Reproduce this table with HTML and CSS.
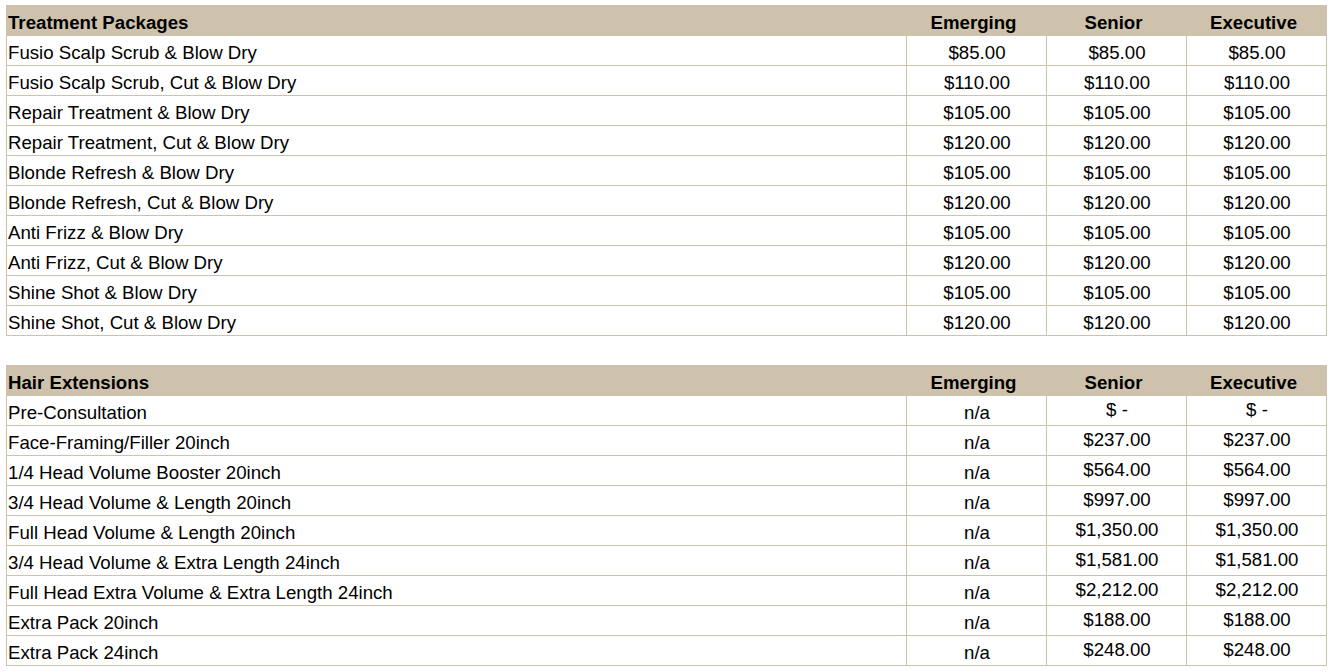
FILE: index.html
```html
<!DOCTYPE html>
<html lang="en">
<head>
<meta charset="utf-8">
<title>Price List</title>
<link rel="stylesheet" href="styles.css">
</head>
<body>
<div class="sheet">
<table class="price-table">
  <colgroup><col class="c-name"><col class="c-tier"><col class="c-tier"><col class="c-tier"></colgroup>
  <thead>
    <tr><th class="name">Treatment Packages</th><th>Emerging</th><th>Senior</th><th>Executive</th></tr>
  </thead>
  <tbody>
    <tr><td class="name">Fusio Scalp Scrub &amp; Blow Dry</td><td>$85.00</td><td>$85.00</td><td>$85.00</td></tr>
    <tr><td class="name">Fusio Scalp Scrub, Cut &amp; Blow Dry</td><td>$110.00</td><td>$110.00</td><td>$110.00</td></tr>
    <tr><td class="name">Repair Treatment &amp; Blow Dry</td><td>$105.00</td><td>$105.00</td><td>$105.00</td></tr>
    <tr><td class="name">Repair Treatment, Cut &amp; Blow Dry</td><td>$120.00</td><td>$120.00</td><td>$120.00</td></tr>
    <tr><td class="name">Blonde Refresh &amp; Blow Dry</td><td>$105.00</td><td>$105.00</td><td>$105.00</td></tr>
    <tr><td class="name">Blonde Refresh, Cut &amp; Blow Dry</td><td>$120.00</td><td>$120.00</td><td>$120.00</td></tr>
    <tr><td class="name">Anti Frizz &amp; Blow Dry</td><td>$105.00</td><td>$105.00</td><td>$105.00</td></tr>
    <tr><td class="name">Anti Frizz, Cut &amp; Blow Dry</td><td>$120.00</td><td>$120.00</td><td>$120.00</td></tr>
    <tr><td class="name">Shine Shot &amp; Blow Dry</td><td>$105.00</td><td>$105.00</td><td>$105.00</td></tr>
    <tr><td class="name">Shine Shot, Cut &amp; Blow Dry</td><td>$120.00</td><td>$120.00</td><td>$120.00</td></tr>
  </tbody>
</table>

<table class="price-table">
  <colgroup><col class="c-name"><col class="c-tier"><col class="c-tier"><col class="c-tier"></colgroup>
  <thead>
    <tr><th class="name">Hair Extensions</th><th>Emerging</th><th>Senior</th><th>Executive</th></tr>
  </thead>
  <tbody>
    <tr><td class="name">Pre-Consultation</td><td>n/a</td><td class="acct">$ -</td><td class="acct">$ -</td></tr>
    <tr><td class="name">Face-Framing/Filler 20inch</td><td>n/a</td><td class="acct">$237.00</td><td class="acct">$237.00</td></tr>
    <tr><td class="name">1/4 Head Volume Booster 20inch</td><td>n/a</td><td class="acct">$564.00</td><td class="acct">$564.00</td></tr>
    <tr><td class="name">3/4 Head Volume &amp; Length 20inch</td><td>n/a</td><td class="acct">$997.00</td><td class="acct">$997.00</td></tr>
    <tr><td class="name">Full Head Volume &amp; Length 20inch</td><td>n/a</td><td class="acct">$1,350.00</td><td class="acct">$1,350.00</td></tr>
    <tr><td class="name">3/4 Head Volume &amp; Extra Length 24inch</td><td>n/a</td><td class="acct">$1,581.00</td><td class="acct">$1,581.00</td></tr>
    <tr><td class="name">Full Head Extra Volume &amp; Extra Length 24inch</td><td>n/a</td><td class="acct">$2,212.00</td><td class="acct">$2,212.00</td></tr>
    <tr><td class="name">Extra Pack 20inch</td><td>n/a</td><td class="acct">$188.00</td><td class="acct">$188.00</td></tr>
    <tr><td class="name">Extra Pack 24inch</td><td>n/a</td><td class="acct">$248.00</td><td class="acct">$248.00</td></tr>
  </tbody>
</table>
</div>
</body>
</html>
```

FILE: styles.css
```css
html, body {
  margin: 0;
  padding: 0;
  background: #ffffff;
}

body {
  font-family: "Liberation Sans", Arial, sans-serif;
  color: #000000;
}

.sheet {
  padding: 5px 0 0 6px;
  display: flex;
  flex-direction: column;
  gap: 29px;
  align-items: flex-start;
}

.price-table {
  border-collapse: collapse;
  table-layout: fixed;
  width: 1321px;
  font-size: 18.67px;
}

.c-name { width: 900px; }
.c-tier { width: 140px; }

.price-table th,
.price-table td {
  height: 30px;
  padding: 0 0 2px 1px;
  vertical-align: bottom;
  text-align: center;
  white-space: nowrap;
  line-height: 20px;
  box-sizing: border-box;
}

.price-table th {
  background: #cec2ac;
  font-weight: bold;
  font-size: 18.67px;
  border: 1px solid #cec2ac;
  padding-right: 7px;
}

.price-table td {
  border: 1px solid #cec2ab;
}

.price-table .name {
  text-align: left;
  padding-left: 1px;
}

.price-table td.acct {
  padding-bottom: 5px;
}
```
